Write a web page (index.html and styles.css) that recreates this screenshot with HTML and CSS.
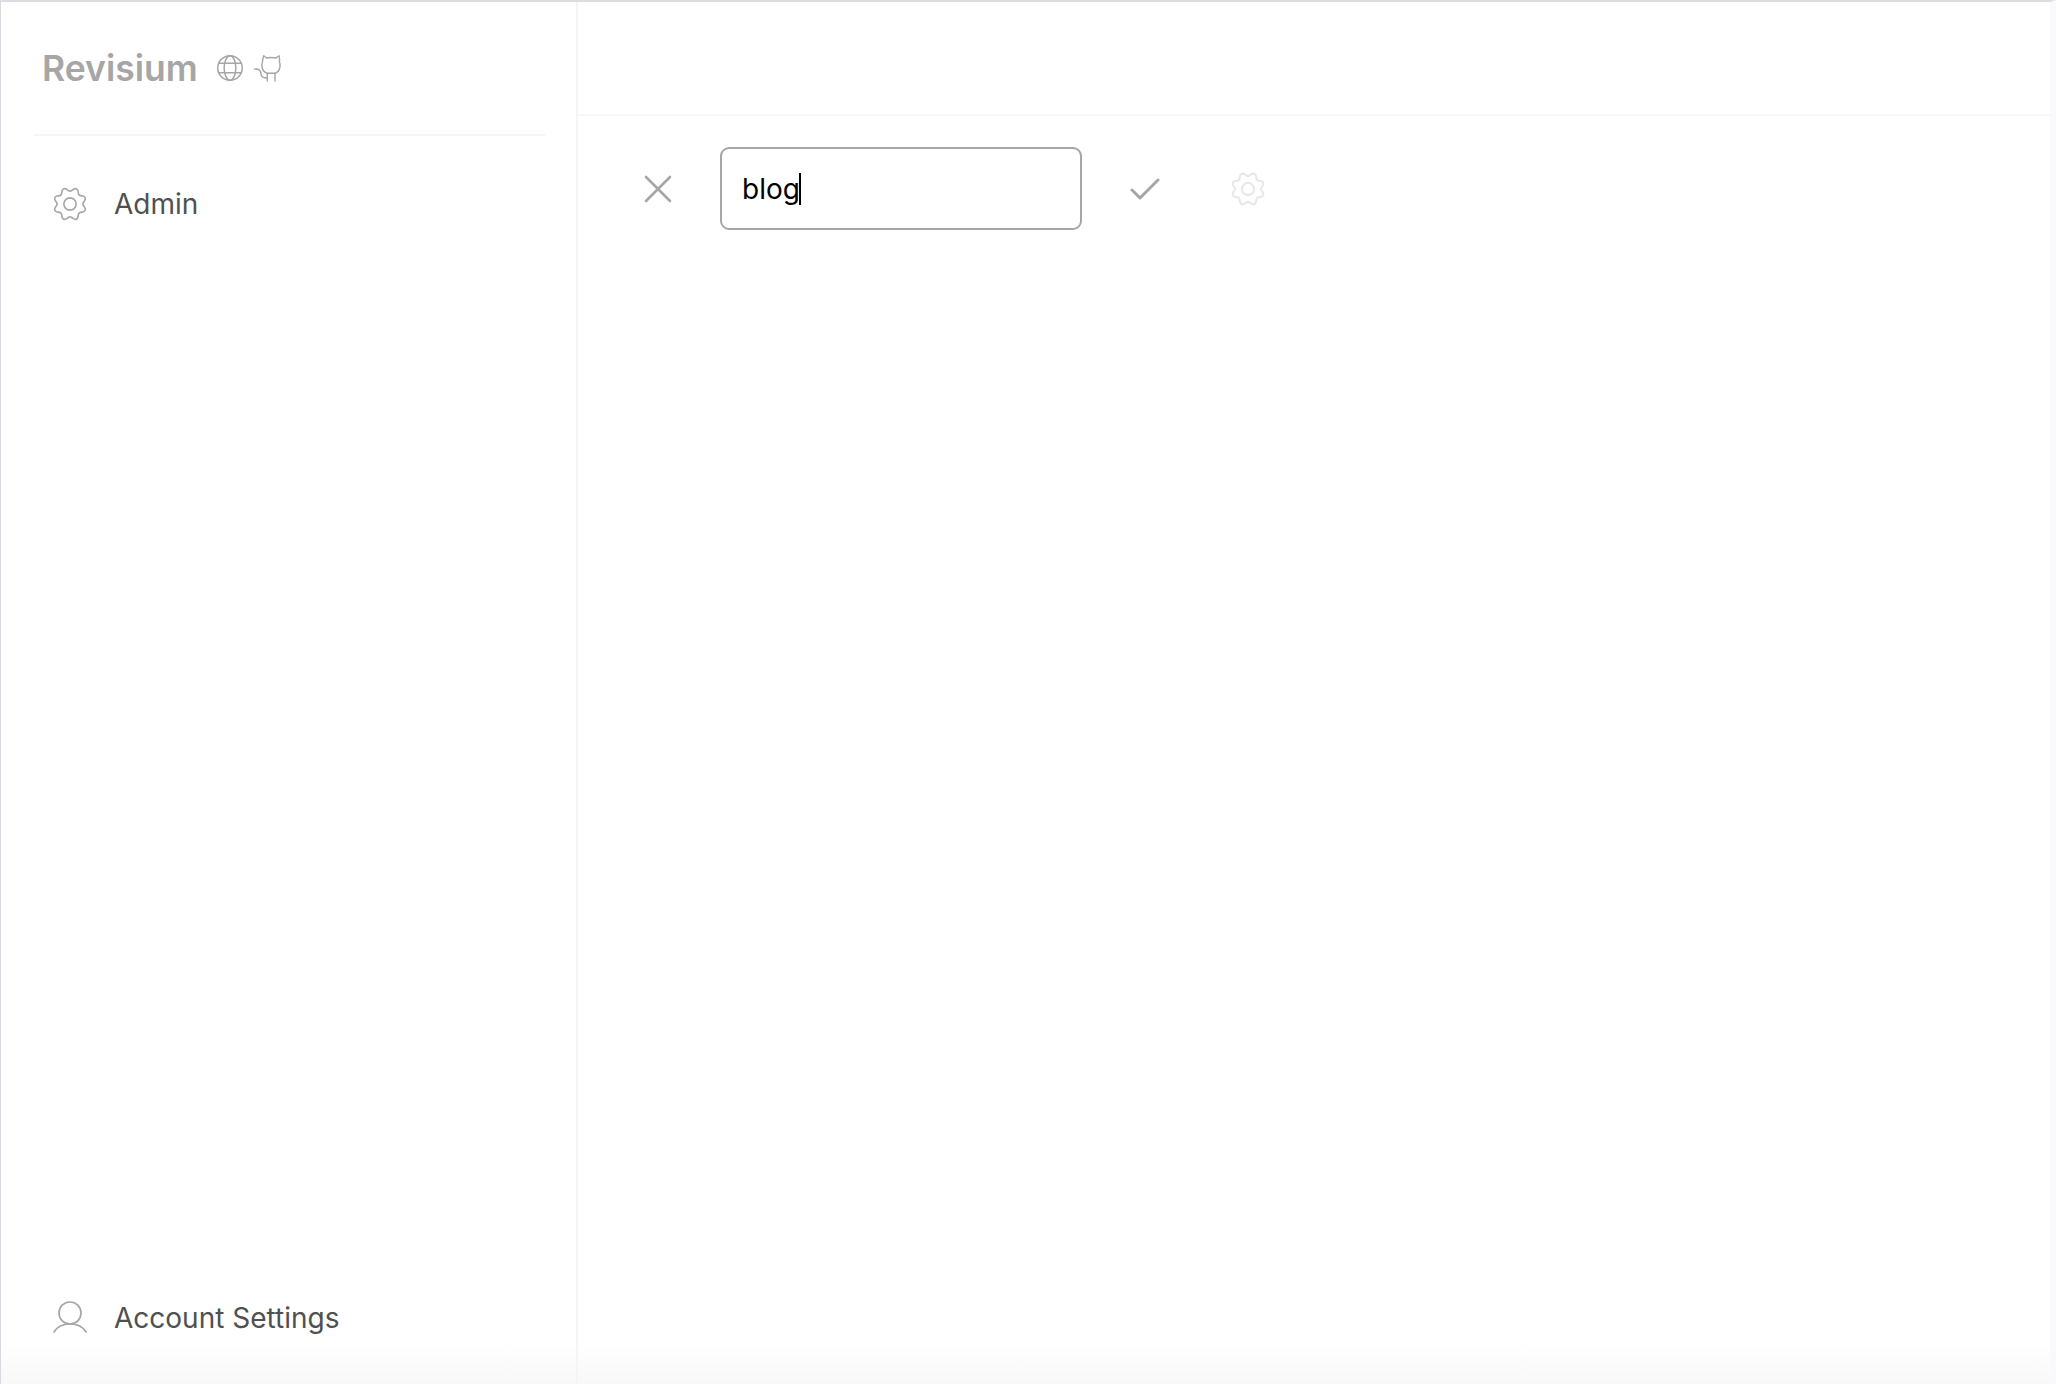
FILE: index.html
```html
<!DOCTYPE html>
<html lang="en">

<head>
  <meta charset="UTF-8">
  <title>Revisium</title>
  <link rel="stylesheet" href="styles.css">
</head>

<body>
  <div class="page">
    <aside class="sidebar">
      <div class="brand">
        <a href="#" class="logo">Revisium</a>
        <a href="#" class="brand-icon">
          <svg width="28" height="28" viewBox="0 0 24 24" fill="none" stroke="currentColor" stroke-width="1.3">
            <circle cx="12" cy="12" r="10.5" />
            <ellipse cx="12" cy="12" rx="5" ry="10.5" />
            <path d="M2.4 8h19.2M2.4 16h19.2" />
          </svg>
        </a>
        <a href="#" class="brand-icon">
          <svg width="30" height="30" viewBox="0 0 30 30" fill="none" stroke="currentColor" stroke-width="1.4" stroke-linecap="round" stroke-linejoin="round">
            <path d="M11.700 2.700L14.500 5Q19 4 24 5L27 2.700Q28 7 27.500 9Q28.500 11 28 14Q27 19 23 20.300H15.300Q11 19 10 14Q9.500 11 10.500 9Q10.500 6 11.700 2.700Z" />
            <path d="M15.300 20.300V28M23 20.300V28" />
            <path d="M2.700 16Q9 15.500 9 21Q9 25 15.300 25" />
          </svg>
        </a>
      </div>
      <nav class="side-nav">
        <a href="#" class="side-link">
          <svg class="side-icon" width="36" height="36" viewBox="-1 -1 38 38" fill="none" stroke="currentColor" stroke-width="1.700" stroke-linejoin="round">
            <circle cx="18" cy="18" r="6.500" />
            <path d="M21.020 2.790Q25.470-.02 26.620 5.120Q26.480 9.520 30.880 9.380Q36.020 10.530 33.210 14.980Q30 18 33.210 21.020Q36.020 25.470 30.880 26.620Q26.480 26.480 26.620 30.880Q25.470 36.020 21.020 33.210Q18 30 14.980 33.210Q10.530 36.020 9.380 30.880Q9.520 26.480 5.120 26.620Q-.02 25.470 2.790 21.020Q6 18 2.790 14.980Q-.02 10.530 5.120 9.380Q9.520 9.520 9.380 5.120Q10.530-.02 14.980 2.790Q18 6 21.020 2.790Z" />
          </svg>
          <span>Admin</span>
        </a>
      </nav>
      <div class="side-bottom">
        <a href="#" class="side-link">
          <svg class="side-icon" width="36" height="36" viewBox="0 0 36 36" fill="none" stroke="currentColor" stroke-width="1.700" stroke-linecap="round">
            <circle cx="18" cy="13" r="11" />
            <path d="M2 32C5.500 26 11 24 18 24S30.500 26 34 32" />
          </svg>
          <span>Account Settings</span>
        </a>
      </div>
    </aside>
    <main class="main">
      <header class="top-bar"></header>
      <section class="create-row">
        <button class="icon-btn close-btn">
          <svg width="28" height="28" viewBox="0 0 28 28" fill="none" stroke="currentColor" stroke-width="2.600" stroke-linecap="round">
            <path d="M2 2l24 24M26 2L2 26" />
          </svg>
        </button>
        <div class="name-input">
          <span>blog</span><span class="caret"></span>
        </div>
        <button class="icon-btn check-btn">
          <svg width="30" height="22" viewBox="0 0 30 22" fill="none" stroke="currentColor" stroke-width="3" stroke-linecap="round" stroke-linejoin="round">
            <path d="M2 12l8 8L28 2" />
          </svg>
        </button>
        <button class="icon-btn gear-btn">
          <svg width="36" height="36" viewBox="-1 -1 38 38" fill="none" stroke="currentColor" stroke-width="2.200" stroke-linejoin="round">
            <circle cx="18" cy="18" r="6.500" />
            <path d="M21.020 2.790Q25.470-.02 26.620 5.120Q26.480 9.520 30.880 9.380Q36.020 10.530 33.210 14.980Q30 18 33.210 21.020Q36.020 25.470 30.880 26.620Q26.480 26.480 26.620 30.880Q25.470 36.020 21.020 33.210Q18 30 14.980 33.210Q10.530 36.020 9.380 30.880Q9.520 26.480 5.120 26.620Q-.02 25.470 2.790 21.020Q6 18 2.790 14.980Q-.02 10.530 5.120 9.380Q9.520 9.520 9.380 5.120Q10.530-.02 14.980 2.790Q18 6 21.020 2.790Z" />
          </svg>
        </button>
      </section>
    </main>
  </div>
</body>

</html>
```

FILE: styles.css
```css
* {
  box-sizing: border-box;
}

html,
body {
  height: 100%;
  margin: 0;
}

body {
  background-color: #fff;
  font-family: Inter, "Liberation Sans", sans-serif;
}

a {
  text-decoration: none;
  color: inherit;
}

.page {
  display: flex;
  height: 1384px;
  border-top: 2px solid #dcdde2;
  border-left: 1px solid #d8dadf;
  border-right: 6px solid #f9f9fc;
  background: linear-gradient(to bottom, #fff 1340px, #f8f8f8 1382px);
}

.sidebar {
  width: 577px;
  flex-shrink: 0;
  display: flex;
  flex-direction: column;
  border-right: 2px solid #f5f5f5;
  padding: 0 31px 0 33px;
}

.brand {
  display: flex;
  align-items: center;
  height: 134px;
  border-bottom: 2px solid #f5f5f5;
  padding-left: 8px;
  color: #a6a6a6;
}

.logo {
  font-size: 35.500px;
  font-weight: 600;
  margin-right: 18px;
}

.brand-icon {
  display: flex;
  margin-right: 8px;
}

.side-nav {
  flex: 1;
  padding-top: 50px;
}

.side-link {
  display: flex;
  align-items: center;
  gap: 26px;
  padding-left: 18px;
  color: #505050;
  font-size: 28px;
}

.side-icon {
  color: #a6a6a6;
  flex-shrink: 0;
}

.side-bottom {
  padding-bottom: 48px;
}

.main {
  flex: 1;
}

.top-bar {
  height: 114px;
  border-bottom: 2px solid #f7f7f7;
}

.create-row {
  display: flex;
  align-items: center;
  padding: 31px 0 0 66px;
}

.icon-btn {
  display: flex;
  padding: 0;
  border: none;
  background: none;
}

.close-btn {
  color: #a6a6a6;
  margin-right: 48px;
}

.name-input {
  display: flex;
  align-items: center;
  width: 362px;
  height: 83px;
  border: 2px solid #a6a6a6;
  border-radius: 9px;
  padding: 0 20px;
  color: #000;
  font-size: 28px;
}

.caret {
  width: 2px;
  height: 32px;
  background-color: #000;
  margin-left: -1px;
}

.check-btn {
  color: #a6a6a6;
  margin-left: 48px;
}

.gear-btn {
  color: #e8e8e8;
  margin-left: 70px;
}
```
